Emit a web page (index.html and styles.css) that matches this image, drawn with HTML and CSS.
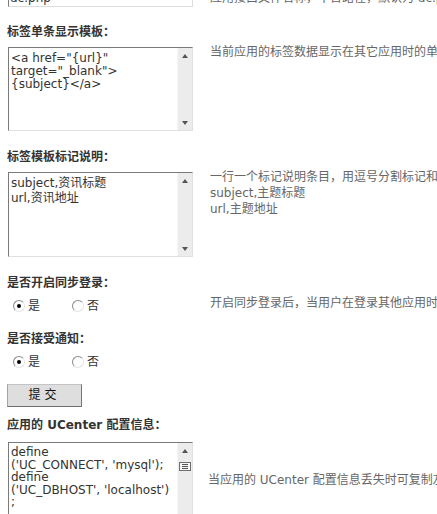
FILE: index.html
```html
<!DOCTYPE html>
<html lang="zh-CN">
<head>
<meta charset="utf-8">
<title>应用设置</title>
<link rel="stylesheet" href="styles.css">
</head>
<body>
<div class="page">
  <div class="row">
    <div class="input">uc.php</div>
    <div class="desc desc-top">应用接口文件名称，不含路径，默认为 uc.php</div>
  </div>

  <div class="label label-first">标签单条显示模板：</div>
  <div class="row">
    <div class="ta ta1">
      <div class="ta-text">&lt;a href="{url}"<br>target="_blank"&gt;<br>{subject}&lt;/a&gt;</div>
      <div class="sb"><span class="arrow-up"></span><span class="arrow-down"></span></div>
    </div>
    <div class="desc">当前应用的标签数据显示在其它应用时的单条数据模板</div>
  </div>

  <div class="label">标签模板标记说明：</div>
  <div class="row">
    <div class="ta ta2">
      <div class="ta-text">subject,资讯标题<br>url,资讯地址</div>
      <div class="sb"><span class="arrow-up"></span><span class="arrow-down"></span></div>
    </div>
    <div class="desc">一行一个标记说明条目，用逗号分割标记和说明<br>subject,主题标题<br>url,主题地址</div>
  </div>

  <div class="label">是否开启同步登录：</div>
  <div class="row">
    <div class="radios">
      <label class="opt opt-first"><span class="radio on"></span><span class="opt-text">是</span></label>
      <label class="opt"><span class="radio"></span><span class="opt-text">否</span></label>
    </div>
    <div class="desc">开启同步登录后，当用户在登录其他应用时，同时也会登录该应用</div>
  </div>

  <div class="label label-after-radio">是否接受通知：</div>
  <div class="row">
    <div class="radios">
      <label class="opt opt-first"><span class="radio on"></span><span class="opt-text">是</span></label>
      <label class="opt"><span class="radio"></span><span class="opt-text">否</span></label>
    </div>
  </div>

  <button class="btn" type="button">提 交</button>

  <div class="label label-after-btn">应用的 UCenter 配置信息：</div>
  <div class="row">
    <div class="ta ta3">
      <div class="ta-text">define<br>('UC_CONNECT', 'mysql');<br>define<br>('UC_DBHOST', 'localhost')<br>;</div>
      <div class="sb sb3">
        <span class="arrow-up"></span>
        <svg class="thumb" width="12" height="9" viewBox="0 0 12 9">
          <rect x="0.5" y="0.5" width="11" height="8" fill="#f6f6f6" stroke="#6f6f6f"/>
          <line x1="3" y1="2.5" x2="9" y2="2.5" stroke="#555"/>
          <line x1="3" y1="4.5" x2="9" y2="4.5" stroke="#555"/>
          <line x1="3" y1="6.5" x2="9" y2="6.5" stroke="#555"/>
        </svg>
      </div>
    </div>
    <div class="desc desc-mid">当应用的 UCenter 配置信息丢失时可复制左侧的代码到应用的配置文件中</div>
  </div>
</div>
</body>
</html>
```

FILE: styles.css
```css
html, body {
  margin: 0;
  padding: 0;
  background: #ffffff;
  overflow: hidden;
}

body {
  font-family: "DejaVu Sans", "Noto Sans CJK SC", sans-serif;
  font-size: 12px;
  color: #333333;
}

.page {
  margin-top: -11px;
  padding-left: 7px;
}

.row {
  display: flex;
  align-items: flex-start;
  gap: 17px;
}

.input {
  flex: none;
  width: 185px;
  height: 18px;
  margin-left: 1px;
  box-sizing: border-box;
  border: 1px solid;
  border-color: #7a7a7a #dddddd #dddddd #7a7a7a;
  padding: 0 1px;
  line-height: 16px;
  color: #333333;
  white-space: nowrap;
  overflow: hidden;
}

.desc {
  color: #666666;
  line-height: 16px;
  white-space: nowrap;
  margin-top: -3px;
}

.desc-top {
  margin-top: 1px;
}

.desc-mid {
  margin-top: 30px;
  margin-left: -2px;
}

.label {
  font-weight: bold;
  line-height: 16px;
  white-space: nowrap;
  color: #333333;
  margin-top: 18px;
  margin-bottom: 7px;
}

.label-first {
  margin-top: 17px;
}

.label-after-radio {
  margin-top: 17px;
}

.label-after-btn {
  margin-top: 10px;
  margin-bottom: 9px;
}

.ta {
  flex: none;
  display: flex;
  width: 185px;
  margin-left: 1px;
  box-sizing: border-box;
  border: 1px solid;
  border-color: #7a7a7a #e0e0e0 #e0e0e0 #7a7a7a;
  background: #ffffff;
  overflow: hidden;
}

.ta1 { height: 84px; }
.ta2 { height: 85px; }
.ta3 { height: 92px; }

.ta-text {
  flex: 1;
  min-width: 0;
  padding: 3px 2px;
  white-space: nowrap;
  overflow: hidden;
  color: #333333;
}

.ta1 .ta-text { line-height: 13px; padding-top: 4px; }
.ta2 .ta-text { line-height: 15px; }
.ta3 .ta-text { line-height: 12.6px; }

.sb {
  flex: none;
  width: 15px;
  background: #ececec;
  border-left: 1px solid #f7f7f7;
  display: flex;
  flex-direction: column;
  align-items: center;
  justify-content: space-between;
  padding: 6px 0 5px;
  box-sizing: border-box;
}

.sb3 {
  justify-content: flex-start;
}

.arrow-up {
  width: 0;
  height: 0;
  border-left: 3.5px solid transparent;
  border-right: 3.5px solid transparent;
  border-bottom: 4px solid #555555;
}

.arrow-down {
  width: 0;
  height: 0;
  border-left: 3.5px solid transparent;
  border-right: 3.5px solid transparent;
  border-top: 4px solid #555555;
}

.thumb {
  display: block;
  margin-top: 9px;
}

.radios {
  flex: none;
  width: 180px;
  height: 16px;
  padding-left: 6px;
  display: flex;
  align-items: center;
}

.opt {
  display: flex;
  align-items: center;
  color: #333333;
  line-height: 16px;
}

.opt-first {
  width: 59px;
}

.radio {
  position: relative;
  width: 12px;
  height: 12px;
  box-sizing: border-box;
  border-radius: 50%;
  border: 1px solid;
  border-color: #8a8a8a #e4e4e4 #e4e4e4 #8a8a8a;
  background: #ffffff;
}

.radio.on::after {
  content: "";
  position: absolute;
  left: 3px;
  top: 3px;
  width: 4px;
  height: 4px;
  border-radius: 50%;
  background: #000000;
}

.opt-text {
  margin-left: 3px;
}

.row + .btn {
  margin-top: 14px;
}

.btn {
  display: block;
  margin-left: 0;
  width: 75px;
  height: 23px;
  box-sizing: border-box;
  padding: 0 4px 0 0;
  background: #dedede;
  border: 1px solid;
  border-color: #c4c4c4 #777777 #707070 #a4a4a4;
  border-radius: 0;
  font-family: "DejaVu Sans", "Noto Sans CJK SC", sans-serif;
  font-size: 12px;
  color: #111111;
  line-height: 21px;
  text-align: center;
}
```
